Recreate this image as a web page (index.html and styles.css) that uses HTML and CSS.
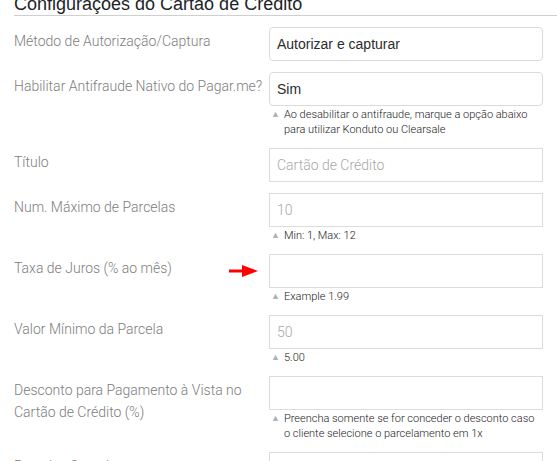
FILE: index.html
```html
<!DOCTYPE html>
<html lang="pt-BR">
<head>
<meta charset="utf-8">
<link rel="stylesheet" href="styles.css">
</head>
<body>
<div class="page">
  <h2 class="section-title">Configurações do Cartão de Crédito</h2>
  <div class="form">
    <div class="row">
      <div class="label">Método de Autorização/Captura</div>
      <div class="field"><div class="select">Autorizar e capturar</div></div>
    </div>
    <div class="row">
      <div class="label">Habilitar Antifraude Nativo do Pagar.me?</div>
      <div class="field">
        <div class="select">Sim</div>
        <div class="help"><span class="tri">▲</span><span>Ao desabilitar o antifraude, marque a opção abaixo para utilizar Konduto ou Clearsale</span></div>
      </div>
    </div>
    <div class="row">
      <div class="label">Título</div>
      <div class="field"><input class="input" type="text" placeholder="Cartão de Crédito"></div>
    </div>
    <div class="row">
      <div class="label">Num. Máximo de Parcelas</div>
      <div class="field">
        <input class="input" type="text" placeholder="10">
        <div class="help"><span class="tri">▲</span><span>Min: 1, Max: 12</span></div>
      </div>
    </div>
    <div class="row">
      <div class="label">Taxa de Juros (% ao mês)</div>
      <svg class="arrow" width="30" height="12" viewBox="0 0 30 12"><rect x="0" y="4.5" width="15" height="3" fill="#f00"/><polygon points="13,0 29,6 13,12" fill="#f00"/></svg>
      <div class="field">
        <input class="input" type="text">
        <div class="help"><span class="tri">▲</span><span>Example 1.99</span></div>
      </div>
    </div>
    <div class="row">
      <div class="label">Valor Mínimo da Parcela</div>
      <div class="field">
        <input class="input" type="text" placeholder="50">
        <div class="help"><span class="tri">▲</span><span>5.00</span></div>
      </div>
    </div>
    <div class="row">
      <div class="label">Desconto para Pagamento à Vista no Cartão de Crédito (%)</div>
      <div class="field">
        <input class="input" type="text">
        <div class="help"><span class="tri">▲</span><span>Preencha somente se for conceder o desconto caso o cliente selecione o parcelamento em 1x</span></div>
      </div>
    </div>
    <div class="row">
      <div class="label">Parcelas Sem Juros</div>
      <div class="field"><input class="input" type="text"></div>
    </div>
  </div>
</div>
</body>
</html>
```

FILE: styles.css
```css
html, body {
  margin: 0;
  padding: 0;
  background: #fff;
  overflow: hidden;
}
.page {
  padding: 0 0 0 14px;
  font-family: Roboto, "Liberation Sans", sans-serif;
}
.section-title {
  margin: -7px 0 0 0;
  padding: 0;
  font-family: "Liberation Sans", Arial, sans-serif;
  font-weight: 400;
  font-size: 18px;
  line-height: 22px;
  color: #1d2327;
  border-bottom: 1px solid #cfcfcf;
}
.form {
  display: flex;
  flex-direction: column;
  gap: 11px;
  padding-top: 11px;
  padding-right: 14px;
}
.row {
  display: flex;
  align-items: flex-start;
  position: relative;
}
.label {
  width: 255px;
  flex: none;
  box-sizing: border-box;
  padding: 3px 4px 0 0;
  font-size: 14px;
  font-weight: 300;
  line-height: 22px;
  color: #7d7d7d;
}
.field {
  width: 274px;
  flex: none;
}
.select {
  box-sizing: border-box;
  height: 34px;
  border: 1px solid #dadada;
  border-radius: 4px;
  padding: 0 7px;
  font-family: "Liberation Sans", Arial, sans-serif;
  font-size: 14px;
  line-height: 32px;
  color: #2c2c2c;
  background: #fff;
}
.input {
  display: block;
  box-sizing: border-box;
  width: 274px;
  height: 34px;
  margin: 0;
  border: 1px solid #dcdcdc;
  border-radius: 0;
  padding: 0 7px;
  font-family: Roboto, sans-serif;
  font-size: 14px;
  font-weight: 300;
  background: #fff;
  outline: none;
}
.input::placeholder {
  color: #a8a8a8;
}
.help {
  display: flex;
  gap: 4px;
  padding: 1px 0 0 2px;
  font-size: 11px;
  font-weight: 300;
  line-height: 15px;
  color: #222;
}
.tri {
  flex: none;
  font-size: 9px;
  color: #a6b3b9;
  line-height: 15px;
}
.arrow {
  position: absolute;
  left: 215px;
  top: 11px;
}
```
